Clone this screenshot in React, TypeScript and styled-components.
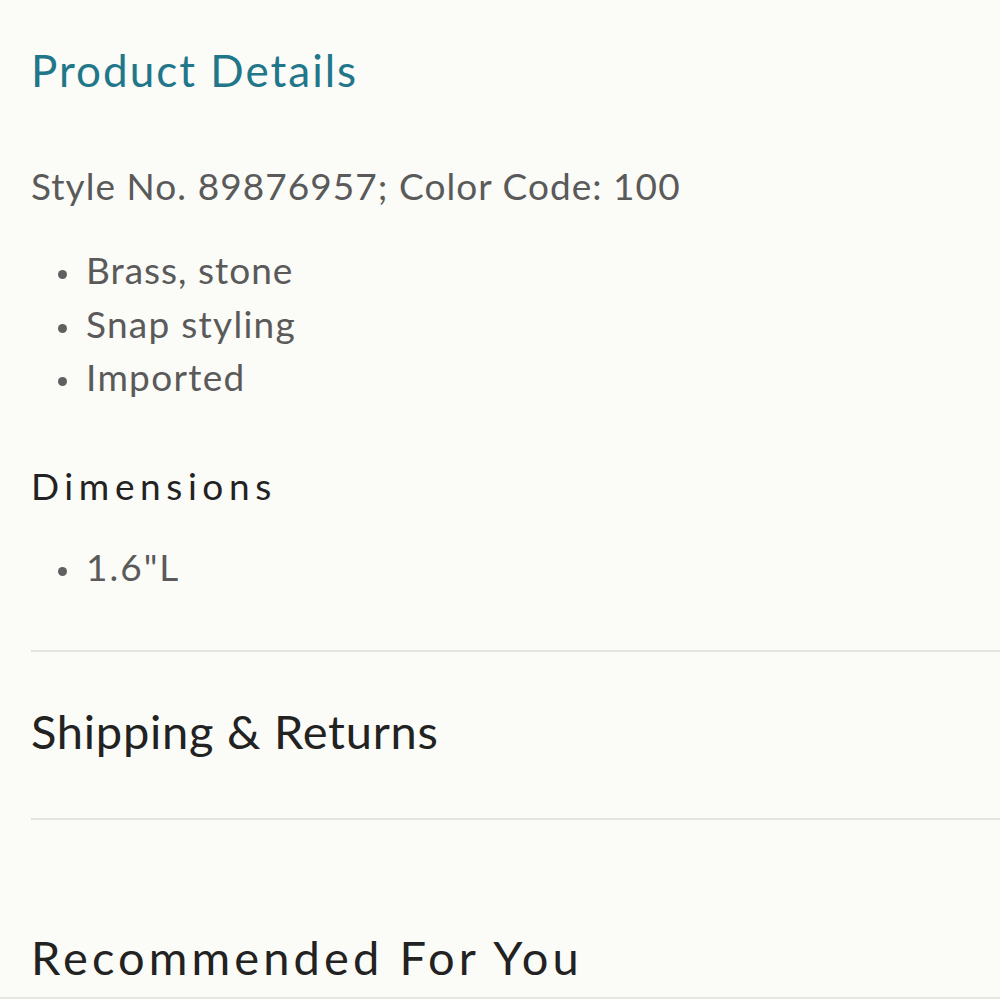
import React from "react";
import styled, { createGlobalStyle } from "styled-components";

const Global = createGlobalStyle`
  html, body { margin: 0; padding: 0; background: #fbfbf7; }
  body { font-family: Lato, "Open Sans", sans-serif; -webkit-font-smoothing: antialiased; }
`;

const Page = styled.div`
  width: 1000px;
  height: 999px;
  overflow: hidden;
  background: #fbfbf7;
  display: flex;
  flex-direction: column;
`;

const Section = styled.section`
  padding-left: 31px;
  display: flex;
  flex-direction: column;
`;

const Title = styled.h2`
  margin: 0;
  font-weight: 400;
  font-size: 44px;
  line-height: 1;
  letter-spacing: 2px;
  color: #1f7789;
  padding-top: 48px;
`;

const Meta = styled.p`
  margin: 0;
  margin-top: 75px;
  font-size: 37px;
  line-height: 1;
  letter-spacing: 1.05px;
  color: #5a5a5a;
`;

const List = styled.ul<{ $mt: number }>`
  margin: ${(p) => p.$mt}px 0 0;
  padding: 0 0 0 55px;
  list-style: none;
`;

const Item = styled.li<{ $ls?: number }>`
  position: relative;
  font-size: 37px;
  line-height: 53.5px;
  letter-spacing: ${(p) => p.$ls ?? 1.2}px;
  color: #5a5a5a;
  &::before {
    content: "";
    position: absolute;
    left: -28px;
    top: calc(50% + 0.5px);
    width: 9px;
    height: 9px;
    border-radius: 50%;
    background: #606060;
  }
`;

const SubHeading = styled.h3`
  margin: 63px 0 0;
  font-weight: 400;
  font-size: 37px;
  line-height: 1;
  letter-spacing: 5.6px;
  color: #222;
`;

const Divider = styled.hr<{ $mt: number }>`
  margin: ${(p) => p.$mt}px 0 0 31px;
  border: 0;
  border-top: 2px solid #e3e3df;
  height: 0;
`;

const Accordion = styled.div`
  padding: 0 0 8px 31px;
  box-sizing: border-box;
  height: 166px;
  display: flex;
  align-items: center;
  font-size: 47px;
  letter-spacing: 0.75px;
  color: #222;
`;

const Recommend = styled.h2`
  margin: 114px 0 0;
  padding-left: 31px;
  font-weight: 400;
  font-size: 47px;
  line-height: 1;
  letter-spacing: 4.1px;
  color: #222;
`;

const Rule = styled.div`
  margin-top: 16px;
  border-top: 2px solid #e6e6e2;
`;

export default function App() {
  return (
    <Page>
      <Global />
      <Section>
        <Title>Product Details</Title>
        <Meta>Style No. 89876957; Color Code: 100</Meta>
        <List $mt={39}>
          <Item $ls={1.0}>Brass, stone</Item>
          <Item $ls={1.27}>Snap styling</Item>
          <Item $ls={1.3}>Imported</Item>
        </List>
        <SubHeading>Dimensions</SubHeading>
        <List $mt={36}>
          <Item $ls={2}>1.6"L</Item>
        </List>
      </Section>
      <Divider $mt={57} />
      <Accordion>Shipping &amp; Returns</Accordion>
      <Divider $mt={0} />
      <Recommend>Recommended For You</Recommend>
      <Rule />
    </Page>
  );
}
